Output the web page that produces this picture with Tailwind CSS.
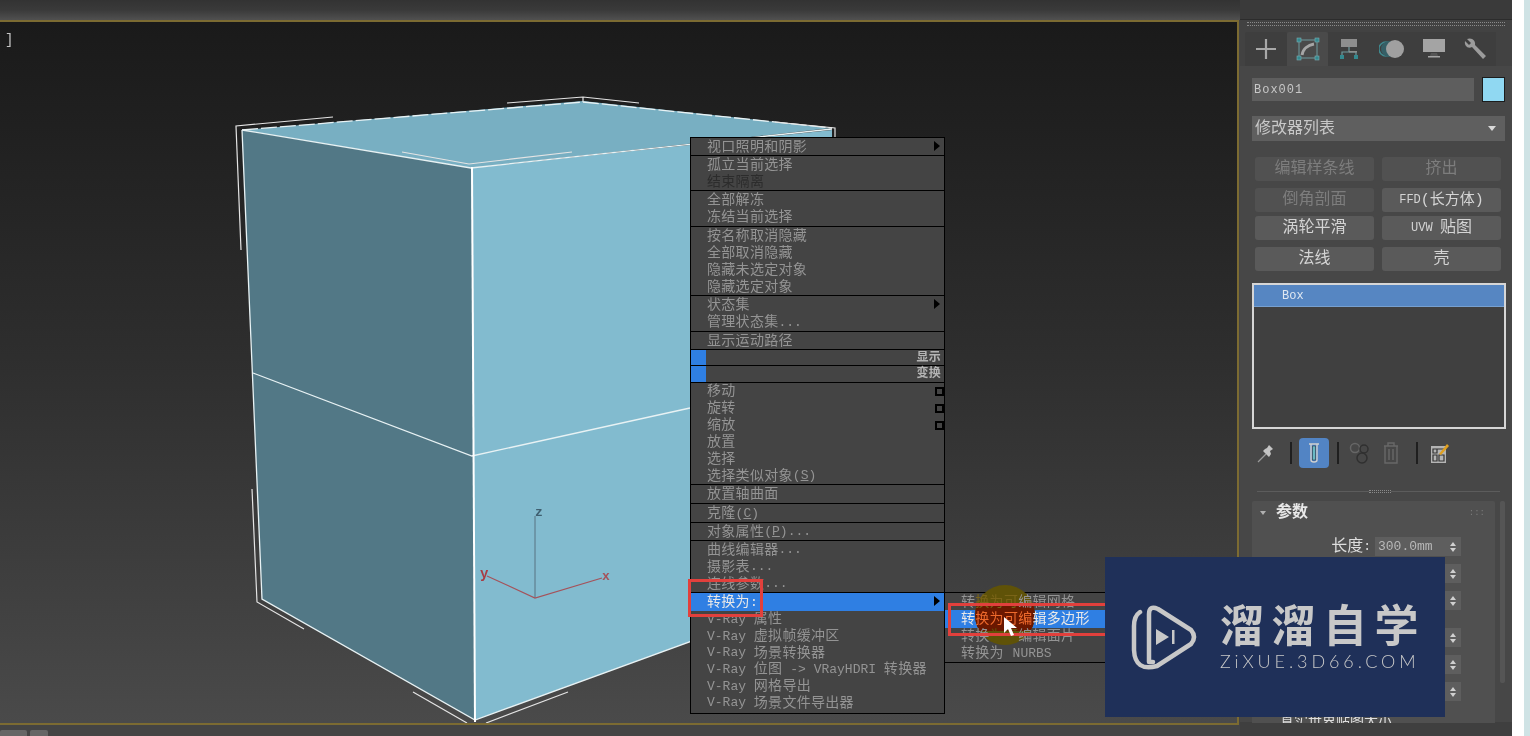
<!DOCTYPE html>
<html lang="zh">
<head>
<meta charset="UTF-8">
<title>3ds Max</title>
<script src="https://cdn.jsdelivr.net/npm/@tailwindcss/browser@4"></script>
</head>
<body class="w-[1530px] h-[736px] overflow-hidden bg-white [font-family:'Liberation_Mono','Noto_Sans_CJK_SC',monospace]">
<div class="relative flex w-[1530px] h-[736px] overflow-hidden blur-[0.5px]">

  <!-- left: top bar, viewport, bottom strip -->
  <div class="flex flex-col w-[1240px] shrink-0 bg-[#444444]">
    <div class="h-[20px] bg-gradient-to-b from-[#333333] via-[#3a3a3a] to-[#505050]"></div>
    <div class="relative h-[705px] w-[1239px] border-y-2 border-r-2 border-[#7c6b32] bg-gradient-to-b from-[#1a1a1a] via-[#2f2f2f] to-[#4a4a4a]">
      <span class="absolute left-[5px] top-[11px] text-[14px] leading-none text-[#c4c4c4]">]</span>

      <svg class="absolute left-0 top-0" width="1238" height="701" viewBox="0 22 1238 701" fill="none">
        <polygon points="242,130 583,101 832,128 471,168" fill="#78afc2"/>
        <polygon points="242,130 471,168 475,720 262,599" fill="#527886"/>
        <polygon points="471,168 832,130 832,590 475,720" fill="#82bbcf"/>
        <g stroke="#e8f2f4" stroke-width="1.3">
          <path d="M242 130 L471 168 L832 129"/>
          <path d="M242 130 L583 102 L832 128" stroke-dasharray="16 3"/>
          <path d="M242 130 L262 599 L475 720 L832 590"/>
          <path d="M253 373 L472 456 L690 408"/>
        </g>
        <path d="M472 167 L475 722" stroke="#ffffff" stroke-width="2"/>
        <g stroke="#e4e4e4" stroke-width="1.2">
          <path d="M333 117 L236 126 L241 250"/>
          <path d="M507 103 L583 97 L639 103 M583 97 V102"/>
          <path d="M402 152 L469 164 L572 152"/>
          <path d="M775 122 L835 128 V137"/>
          <path d="M252 489 L257 602 L304 629"/>
          <path d="M413 692 L467 723 M486 723 L568 692"/>
        </g>
        <path d="M535 598 V516" stroke="#5f7f8e" stroke-width="1.2"/>
        <path d="M487 576 L535 598 L602 578" stroke="#a5525a" stroke-width="1.2"/>
        <text x="535" y="516" font-size="13" font-weight="700" fill="#3f5f70">z</text>
        <text x="480" y="578" font-size="14" font-weight="700" fill="#a83c44">y</text>
        <text x="602" y="580" font-size="13" font-weight="700" fill="#a5525a">x</text>
      </svg>

      <!-- quad menu -->
      <div class="absolute left-[690px] top-[115px] w-[255px] h-[577px] flex flex-col border border-black bg-[#444444] text-[14px] tracking-[0.3px] leading-none text-[#949494]">
        <div class="relative h-[18px] border-b border-black flex items-center pl-[16px]">视口照明和阴影<i class="absolute right-[4px] top-[3px] border-y-[5px] border-l-[6px] border-y-transparent border-l-black"></i></div>
        <div class="h-[35px] border-b border-black flex flex-col pl-[16px]"><span class="flex-1 flex items-center">孤立当前选择</span><span class="flex-1 flex items-center text-[#2c2c2c]">结束隔离</span></div>
        <div class="h-[36px] border-b border-black flex flex-col pl-[16px]"><span class="flex-1 flex items-center">全部解冻</span><span class="flex-1 flex items-center">冻结当前选择</span></div>
        <div class="h-[69px] border-b border-black flex flex-col pl-[16px]"><span class="flex-1 flex items-center">按名称取消隐藏</span><span class="flex-1 flex items-center">全部取消隐藏</span><span class="flex-1 flex items-center">隐藏未选定对象</span><span class="flex-1 flex items-center">隐藏选定对象</span></div>
        <div class="relative h-[36px] border-b border-black flex flex-col pl-[16px]"><span class="flex-1 flex items-center">状态集</span><span class="flex-1 flex items-center whitespace-pre">管理状态集<span class="text-[13px] tracking-normal">...</span></span><i class="absolute right-[4px] top-[3px] border-y-[5px] border-l-[6px] border-y-transparent border-l-black"></i></div>
        <div class="h-[18px] border-b border-black flex items-center pl-[16px]">显示运动路径</div>
        <div class="h-[16px] border-b border-black flex items-center justify-between pr-[3px] text-[12px] font-bold text-[#b4b4b4]"><i class="w-[15px] h-full bg-[#2f7fe3]"></i>显示</div>
        <div class="h-[17px] border-b border-black flex items-center justify-between pr-[3px] text-[12px] font-bold text-[#b4b4b4]"><i class="w-[15px] h-full bg-[#2f7fe3]"></i>变换</div>
        <div class="relative h-[102px] border-b border-black flex flex-col pl-[16px]">
          <span class="flex-1 flex items-center">移动</span><span class="flex-1 flex items-center">旋转</span><span class="flex-1 flex items-center">缩放</span><span class="flex-1 flex items-center">放置</span><span class="flex-1 flex items-center">选择</span><span class="flex-1 flex items-center whitespace-pre">选择类似对象<span class="text-[13px] tracking-normal">(<u>S</u>)</span></span>
          <i class="absolute right-0 top-[4px] w-[9px] h-[9px] border-2 border-black"></i>
          <i class="absolute right-0 top-[21px] w-[9px] h-[9px] border-2 border-black"></i>
          <i class="absolute right-0 top-[38px] w-[9px] h-[9px] border-2 border-black"></i>
        </div>
        <div class="h-[19px] border-b border-black flex items-center pl-[16px]">放置轴曲面</div>
        <div class="h-[19px] border-b border-black flex items-center pl-[16px] whitespace-pre">克隆<span class="text-[13px] tracking-normal">(<u>C</u>)</span></div>
        <div class="h-[18px] border-b border-black flex items-center pl-[16px] whitespace-pre">对象属性<span class="text-[13px] tracking-normal">(<u>P</u>)...</span></div>
        <div class="h-[52px] border-b border-black flex flex-col pl-[16px]"><span class="flex-1 flex items-center whitespace-pre">曲线编辑器<span class="text-[13px] tracking-normal">...</span></span><span class="flex-1 flex items-center whitespace-pre">摄影表<span class="text-[13px] tracking-normal">...</span></span><span class="flex-1 flex items-center whitespace-pre">连线参数<span class="text-[13px] tracking-normal">...</span></span></div>
        <div class="relative h-[18px] flex items-center pl-[16px] bg-[#2f7fe3] text-[#e8e8e8] whitespace-pre">转换为<span class="text-[13px] tracking-normal">:</span><i class="absolute right-[4px] top-[3px] border-y-[5px] border-l-[6px] border-y-transparent border-l-black"></i></div>
        <div class="flex-1 flex flex-col pl-[16px] pb-[2px]">
          <span class="flex-1 flex items-center whitespace-pre"><span class="text-[13px] tracking-normal">V-Ray </span>属性</span>
          <span class="flex-1 flex items-center whitespace-pre"><span class="text-[13px] tracking-normal">V-Ray </span>虚拟帧缓冲区</span>
          <span class="flex-1 flex items-center whitespace-pre"><span class="text-[13px] tracking-normal">V-Ray </span>场景转换器</span>
          <span class="flex-1 flex items-center whitespace-pre"><span class="text-[13px] tracking-normal">V-Ray </span>位图<span class="text-[13px] tracking-normal"> -&gt; VRayHDRI </span>转换器</span>
          <span class="flex-1 flex items-center whitespace-pre"><span class="text-[13px] tracking-normal">V-Ray </span>网格导出</span>
          <span class="flex-1 flex items-center whitespace-pre"><span class="text-[13px] tracking-normal">V-Ray </span>场景文件导出器</span>
        </div>
      </div>

      <!-- submenu, with the recorder's mouse highlight between its fill and its text -->
      <div class="absolute left-[945px] top-[570px] w-[170px] h-[71px] flex flex-col border-y border-black bg-[#444444] pl-[16px] text-[14px] tracking-[0.3px] leading-none text-[#949494]">
        <i class="absolute left-0 right-0 top-[17px] h-[18px] bg-[#2f7fe3]"></i>
        <i class="absolute left-[30px] -top-[8px] w-[60px] h-[60px] rounded-full overflow-hidden bg-[#5f5208]"><b class="block mt-[21px] h-[25px] bg-[#6b1800]"></b></i>
        <span class="relative flex-1 flex items-center">转<span class="text-[#7a6418]">换为可</span>编辑网格</span>
        <span class="relative flex-1 flex items-center text-[#e8e8e8]">转<span class="text-[#ee6a2c]">换为可编</span>辑多边形</span>
        <span class="relative flex-1 flex items-center">转换<span class="text-[#5f5208]">为可</span>编辑面片</span>
        <span class="relative flex-1 flex items-center whitespace-pre">转换为 <span class="text-[13px] tracking-normal">NURBS</span></span>
      </div>

      <!-- red marks, cursor -->
      <div class="absolute left-[688px] top-[557px] w-[75px] h-[38px] border-[3px] border-[#e2403c]"></div>
      <div class="absolute left-[948px] top-[581px] w-[165px] h-[33px] border-[3px] border-[#e2403c]"></div>
      <svg class="absolute left-[1003px] top-[595px]" width="15" height="20" viewBox="0 0 15 20"><path d="M1 0 V16 L5 12 L8 19 L11 18 L8 11 L14 11 Z" fill="#ffffff"/></svg>
    </div>
    <div class="flex gap-[3px] pt-[5px] bg-[#444444]">
      <i class="w-[27px] h-[6px] bg-[#666666] rounded-t-[2px]"></i><i class="w-[18px] h-[6px] bg-[#666666] rounded-t-[2px]"></i>
    </div>
  </div>

  <!-- command panel -->
  <div class="flex flex-col w-[272px] h-[736px] pb-[14px] shrink-0 bg-[#3f3f3f] text-[#cfcfcf]">
    <div class="h-[20px] bg-[#3a3a3a] border-b border-[#2c2c2c]"></div>
    <div class="h-[6px] bg-[#424242] pt-[2px]"><div class="mx-[7px] h-[4px] border-y border-dotted border-[#8a8a8a]"></div></div>

    <div class="flex pl-[5px] pt-[6px] h-[40px] bg-[#424242]">
      <div class="w-[42px] h-full flex items-center justify-center bg-[#3e3e3e] rounded-t-[2px]">
        <svg width="22" height="22" viewBox="0 0 22 22"><path d="M11 1 V21 M1 11 H21" stroke="#a8a8a8" stroke-width="2.2"/></svg>
      </div>
      <div class="w-[41px] h-full flex items-center justify-center bg-[#4a4a4a] rounded-t-[2px]">
        <svg width="24" height="24" viewBox="0 0 24 24" fill="none"><rect x="3" y="3" width="18" height="18" stroke="#6f9a9e" stroke-width="1"/><path d="M6 18 C7 12 12 8 18 7" stroke="#a6a6a6" stroke-width="3"/><g fill="#35898f" stroke="#7ab0b4" stroke-width="0.6"><rect x="1" y="1" width="4" height="4"/><rect x="19" y="1" width="4" height="4"/><rect x="1" y="19" width="4" height="4"/><rect x="19" y="19" width="4" height="4"/></g></svg>
      </div>
      <div class="w-[42px] h-full flex items-center justify-center bg-[#3e3e3e]">
        <svg width="20" height="24" viewBox="0 0 20 24" fill="none"><rect x="2" y="2" width="16" height="8" fill="#8e8e8e"/><path d="M10 10 V15 M3 20 V15 H17 V20" stroke="#6f9a9e" stroke-width="1.2"/><rect x="10" y="14" width="8" height="1.5" fill="#8e8e8e"/><rect x="1" y="18" width="4" height="4" fill="#35898f"/><rect x="15" y="18" width="4" height="4" fill="#35898f"/></svg>
      </div>
      <div class="w-[44px] h-full flex items-center justify-center bg-[#3e3e3e]">
        <svg width="26" height="20" viewBox="0 0 26 20"><circle cx="7" cy="10" r="7" fill="none" stroke="#3f8a90" stroke-width="1.5"/><circle cx="10" cy="10" r="8" fill="#355f66"/><circle cx="16" cy="10" r="9" fill="#a0a0a0"/></svg>
      </div>
      <div class="w-[40px] h-full flex items-center justify-center bg-[#3e3e3e]">
        <svg width="22" height="20" viewBox="0 0 22 20"><rect x="0" y="0" width="22" height="13" fill="#a4a4a4"/><path d="M8 14 H14 L15 17 H7 Z" fill="#555555"/><rect x="5" y="17" width="12" height="1.5" fill="#a4a4a4"/></svg>
      </div>
      <div class="w-[42px] h-full flex items-center justify-center bg-[#3e3e3e]">
        <svg width="24" height="24" viewBox="0 0 24 24" fill="none"><path d="M4 2 L8 6 L6 8 L2 4 C1 9 5 12 9 10 L20 22 L23 19 L12 8 C13 4 9 0 4 2 Z" fill="#9c9c9c"/></svg>
      </div>
    </div>

    <div class="flex-1 flex flex-col bg-[#474747] px-[12px] min-h-0">
      <div class="flex justify-between items-center mt-[11px] h-[25px] w-[253px]">
        <div class="w-[222px] h-[23px] bg-[#5e5e5e] flex items-center pl-[2px] text-[12px] tracking-[1px] leading-none text-[#c8c8c8]">Box001</div>
        <div class="w-[23px] h-[25px] border border-[#1c1c1c] bg-[#90d8f2]"></div>
      </div>
      <div class="flex justify-between items-center mt-[14px] h-[25px] w-[253px] bg-[#5f5f5f] pl-[3px] pr-[9px] text-[16px] leading-none text-[#c8c8c8]">
        修改器列表<i class="border-x-[4px] border-t-[5px] border-x-transparent border-t-[#d8d8d8]"></i>
      </div>

      <div class="grid grid-cols-[119px_119px] gap-x-[8px] ml-[3px] mt-[16px] text-[16px] leading-none">
        <div class="h-[24px] flex items-center justify-center rounded-[3px] bg-[#515151] text-[#7d7d7d]">编辑样条线</div>
        <div class="h-[24px] flex items-center justify-center rounded-[3px] bg-[#515151] text-[#7d7d7d]">挤出</div>
        <div class="h-[24px] mt-[7px] flex items-center justify-center rounded-[3px] bg-[#515151] text-[#7d7d7d]">倒角剖面</div>
        <div class="h-[24px] mt-[7px] flex items-center justify-center rounded-[3px] bg-[#5a5a5a] text-[#d4d4d4] text-[15px]"><span class="text-[12px]">FFD</span>(长方体)</div>
        <div class="h-[24px] mt-[4px] flex items-center justify-center rounded-[3px] bg-[#5a5a5a] text-[#d4d4d4]">涡轮平滑</div>
        <div class="h-[24px] mt-[4px] flex items-center justify-center rounded-[3px] bg-[#5a5a5a] text-[#d4d4d4]"><span class="text-[12px] whitespace-pre">UVW </span>贴图</div>
        <div class="h-[24px] mt-[7px] flex items-center justify-center rounded-[3px] bg-[#5a5a5a] text-[#d4d4d4]">法线</div>
        <div class="h-[24px] mt-[7px] flex items-center justify-center rounded-[3px] bg-[#5a5a5a] text-[#d4d4d4]">壳</div>
      </div>

      <div class="mt-[12px] h-[146px] w-[254px] shrink-0 border-2 border-[#d6d6d6] bg-[#404040]">
        <div class="h-[22px] bg-[#5686c2] border-b border-[#77a0d0] pl-[28px] flex items-center text-[12px] leading-none text-[#dfe8f2]">Box</div>
      </div>

      <div class="flex items-center h-[30px] mt-[9px] shrink-0">
        <svg class="ml-[5px]" width="20" height="20" viewBox="0 0 20 20"><path d="M1 19 L9 11" stroke="#9a9a9a" stroke-width="1.3"/><path d="M6 8 L12 14 L14 11 L13 8 L16 6 L12 2 L10 5 L8 6 Z" fill="#c4c4c4"/></svg>
        <i class="ml-[13px] w-[2px] h-[22px] bg-[#1f1f1f]"></i>
        <div class="ml-[7px] w-[30px] h-[30px] rounded-[4px] bg-[#5284c4] flex items-center justify-center">
          <svg width="12" height="22" viewBox="0 0 12 22" fill="none"><path d="M1 2 H11 M3 2 V18 Q3 20 6 20 Q9 20 9 18 V2" stroke="#d0d0d0" stroke-width="1.4"/><path d="M4.5 4 H7.5 V18 H4.5 Z" fill="#69b9c4" stroke="#222222" stroke-width="0.5"/></svg>
        </div>
        <i class="ml-[8px] w-[2px] h-[22px] bg-[#1f1f1f]"></i>
        <svg class="ml-[10px]" width="22" height="22" viewBox="0 0 22 22" fill="none" stroke="#303030" stroke-width="1.5"><circle cx="6" cy="6" r="4.5" stroke="#666666"/><circle cx="15" cy="7" r="4"/><circle cx="13" cy="16" r="5"/></svg>
        <svg class="ml-[12px]" width="16" height="22" viewBox="0 0 16 22" fill="none" stroke="#686868" stroke-width="1.4"><path d="M1 4 H15 M5 4 V1 H11 V4 M2 4 V21 H14 V4 M6 7 V18 M10 7 V18"/></svg>
        <i class="ml-[17px] w-[2px] h-[22px] bg-[#1f1f1f]"></i>
        <svg class="ml-[12px]" width="20" height="22" viewBox="0 0 20 22"><rect x="1" y="4" width="15" height="17" fill="#b4b4b4"/><path d="M3 7 H14 M3 13 H7 V19 H3 Z M9 13 H14 V19 H9 Z M3 7 H7 V11 H3 Z" fill="none" stroke="#333333" stroke-width="1.2"/><path d="M9 12 L17 2 L19 4 L11 13 Z" fill="#e0a020"/></svg>
      </div>

      <div class="relative mt-[23px] ml-[5px] w-[243px] h-px bg-[#5c5c5c] shrink-0">
        <i class="absolute left-[112px] -top-[1px] w-[22px] h-[3px] bg-[#474747] border-y border-dotted border-[#8a8a8a]"></i>
      </div>

      <div class="flex flex-1 gap-[5px] mt-[9px] min-h-0">
        <div class="relative w-[243px] h-[222px] shrink-0 overflow-hidden bg-[#505050] rounded-t-[2px] text-[16px] leading-none">
          <i class="absolute left-[8px] top-[10px] border-x-[3px] border-t-[4px] border-x-transparent border-t-[#b0b0b0]"></i>
          <div class="absolute left-[24px] top-[4px] font-bold text-[#e8e8e8]">参数</div>
          <div class="absolute right-[10px] top-[8px] text-[9px] text-[#7a7a7a]">:::</div>

          <div class="flex flex-col items-end pr-[34px] pt-[36px] gap-[8px] text-[#dedede]">
            <div class="flex items-center h-[19px]">长度<span class="text-[13px]">:</span>
              <div class="ml-[4px] w-[86px] h-[19px] bg-[#5e5e5e] flex items-center justify-between pl-[3px] pr-[5px] text-[13px] text-[#b8b8b8]">300.0mm
                <span class="flex flex-col gap-[2px]"><i class="border-x-[3px] border-b-[4px] border-x-transparent border-b-[#d0d0d0]"></i><i class="border-x-[3px] border-t-[4px] border-x-transparent border-t-[#d0d0d0]"></i></span>
              </div>
            </div>
            <div class="w-[86px] h-[19px] bg-[#5e5e5e] flex items-center justify-end pr-[5px]"><span class="flex flex-col gap-[2px]"><i class="border-x-[3px] border-b-[4px] border-x-transparent border-b-[#d0d0d0]"></i><i class="border-x-[3px] border-t-[4px] border-x-transparent border-t-[#d0d0d0]"></i></span></div>
            <div class="w-[86px] h-[19px] bg-[#5e5e5e] flex items-center justify-end pr-[5px]"><span class="flex flex-col gap-[2px]"><i class="border-x-[3px] border-b-[4px] border-x-transparent border-b-[#d0d0d0]"></i><i class="border-x-[3px] border-t-[4px] border-x-transparent border-t-[#d0d0d0]"></i></span></div>
            <div class="w-[86px] h-[19px] mt-[10px] bg-[#5e5e5e] flex items-center justify-end pr-[5px]"><span class="flex flex-col gap-[2px]"><i class="border-x-[3px] border-b-[4px] border-x-transparent border-b-[#d0d0d0]"></i><i class="border-x-[3px] border-t-[4px] border-x-transparent border-t-[#d0d0d0]"></i></span></div>
            <div class="w-[86px] h-[19px] bg-[#5e5e5e] flex items-center justify-end pr-[5px]"><span class="flex flex-col gap-[2px]"><i class="border-x-[3px] border-b-[4px] border-x-transparent border-b-[#d0d0d0]"></i><i class="border-x-[3px] border-t-[4px] border-x-transparent border-t-[#d0d0d0]"></i></span></div>
            <div class="w-[86px] h-[19px] bg-[#5e5e5e] flex items-center justify-end pr-[5px]"><span class="flex flex-col gap-[2px]"><i class="border-x-[3px] border-b-[4px] border-x-transparent border-b-[#d0d0d0]"></i><i class="border-x-[3px] border-t-[4px] border-x-transparent border-t-[#d0d0d0]"></i></span></div>
            <div class="self-start ml-[28px] mt-[6px] text-[14px] whitespace-nowrap">真实世界贴图大小</div>
          </div>
        </div>
        <div class="w-[5px] h-[182px] shrink-0 rounded-[2px] bg-[#555555]"></div>
      </div>
    </div>
  </div>

  <div class="flex-1 flex justify-end bg-white"><i class="w-[6px] h-full bg-[#cfe3e5]"></i></div>

  <!-- watermark -->
  <div class="absolute left-[1105px] top-[557px] w-[340px] h-[160px] bg-[#1f3059] flex items-center text-[#c8c8c8]">
    <svg class="ml-[26px] shrink-0" width="66" height="70" viewBox="0 0 66 70" fill="none">
      <path d="M22 60 H18 V12 Q18 3 27 7 L60 28 Q66 35 60 42 L26 64 Q4 70 3 48 V24 Q3 14 9 10" stroke="#c8c8c8" stroke-width="4.5" stroke-linecap="round" stroke-linejoin="round"/>
      <path d="M25 27 L38 35 L25 43 Z" fill="#c8c8c8"/><rect x="41" y="28" width="2.5" height="14" fill="#c8c8c8"/>
    </svg>
    <div class="ml-[23px] flex flex-col -mt-[3px]">
      <div class="text-[44px] leading-[44px] font-bold tracking-[7.5px] whitespace-nowrap [font-family:'Noto_Sans_CJK_SC',sans-serif]">溜溜自学</div>
      <div class="mt-[6px] text-[18px] leading-[20px] tracking-[3.9px] whitespace-nowrap [font-family:'Lato',sans-serif] font-light">ZiXUE.3D66.COM</div>
    </div>
  </div>
</div>
</body>
</html>
